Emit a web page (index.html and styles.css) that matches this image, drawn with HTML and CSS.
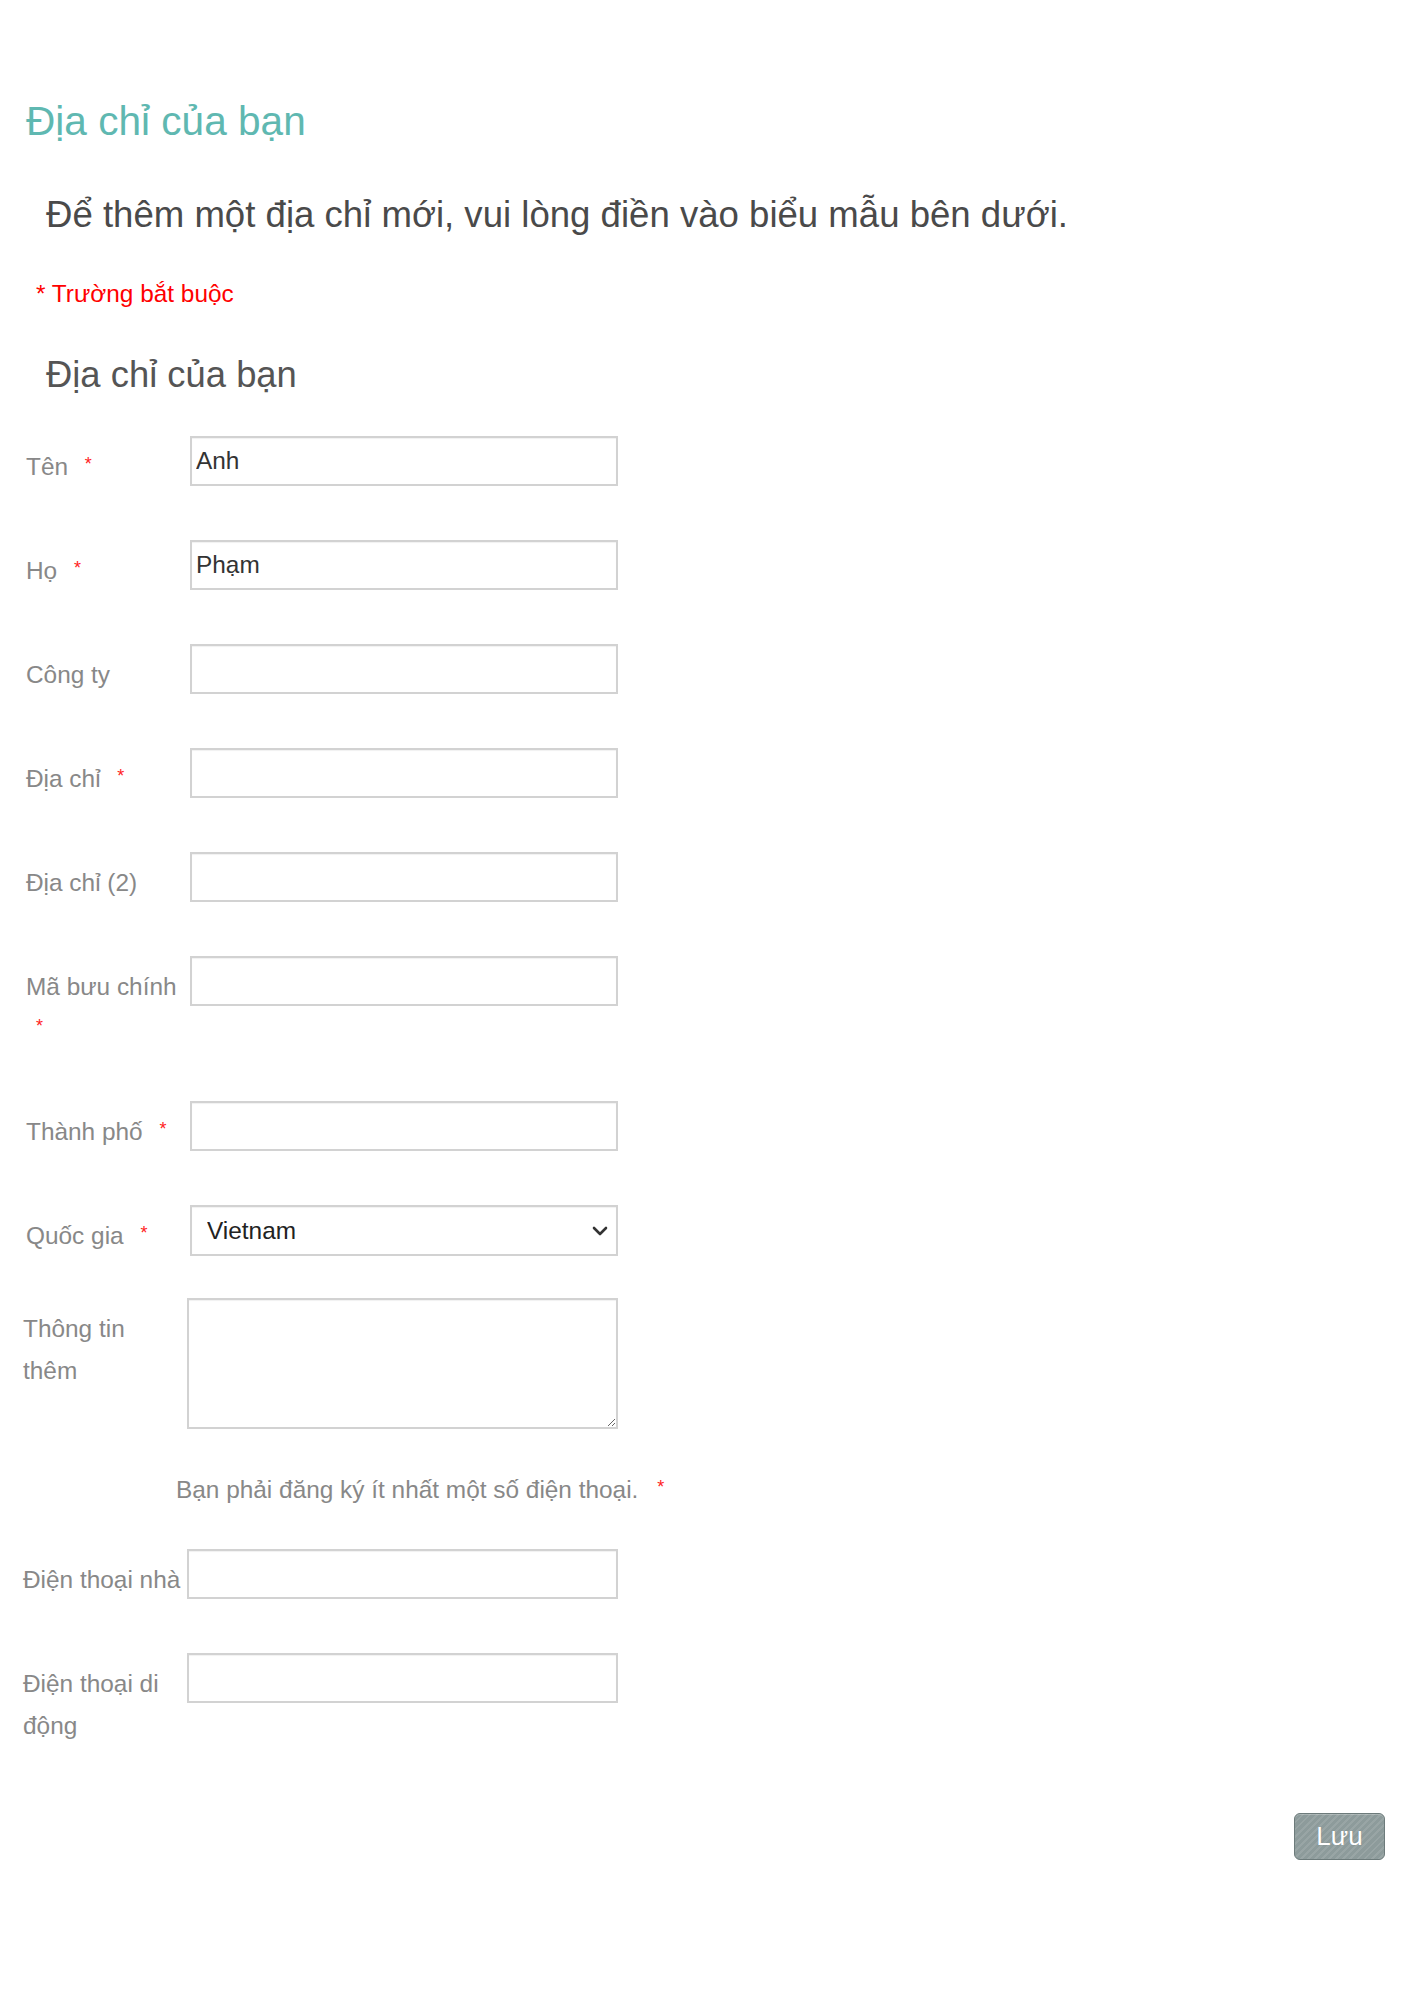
FILE: index.html
```html
<!DOCTYPE html>
<html lang="vi">
<head>
<meta charset="utf-8">
<title>Địa chỉ của bạn</title>
<link rel="stylesheet" href="styles.css">
</head>
<body>
<div class="page">
  <h1 class="title">Địa chỉ của bạn</h1>
  <p class="intro">Để thêm một địa chỉ mới, vui lòng điền vào biểu mẫu bên dưới.</p>
  <p class="required-note">* Trường bắt buộc</p>
  <h2 class="subtitle">Địa chỉ của bạn</h2>

  <form class="form">
    <div class="row">
      <label class="label">Tên <span class="req">*</span></label>
      <input class="field" type="text" value="Anh">
    </div>
    <div class="row">
      <label class="label">Họ <span class="req">*</span></label>
      <input class="field" type="text" value="Phạm">
    </div>
    <div class="row">
      <label class="label">Công ty</label>
      <input class="field" type="text">
    </div>
    <div class="row">
      <label class="label">Địa chỉ <span class="req">*</span></label>
      <input class="field" type="text">
    </div>
    <div class="row">
      <label class="label">Địa chỉ (2)</label>
      <input class="field" type="text">
    </div>
    <div class="row">
      <label class="label">Mã bưu chính <span class="req">*</span></label>
      <input class="field" type="text">
    </div>
    <div class="row">
      <label class="label">Thành phố <span class="req">*</span></label>
      <input class="field" type="text">
    </div>
    <div class="row row-select">
      <label class="label">Quốc gia <span class="req">*</span></label>
      <div class="select-wrap">
        <select class="field select">
          <option>Vietnam</option>
        </select>
        <svg class="chevron" width="16" height="10" viewBox="0 0 16 10" aria-hidden="true"><path d="M2 2 L8 8 L14 2" fill="none" stroke="#333" stroke-width="2.6" stroke-linecap="round" stroke-linejoin="round"/></svg>
      </div>
    </div>
    <div class="row row-wide row-textarea">
      <label class="label">Thông tin thêm</label>
      <textarea class="field area"></textarea>
    </div>
    <p class="phone-note">Bạn phải đăng ký ít nhất một số điện thoại. <span class="req">*</span></p>
    <div class="row row-wide">
      <label class="label">Điện thoại nhà</label>
      <input class="field" type="text">
    </div>
    <div class="row row-wide row-last">
      <label class="label">Điện thoại di động</label>
      <input class="field" type="text">
    </div>
    <div class="actions">
      <button type="button" class="btn">Lưu</button>
    </div>
  </form>
</div>
</body>
</html>
```
FILE: styles.css
```css
html, body {
  margin: 0;
  padding: 0;
  background: #fff;
}
body {
  font-family: "Liberation Sans", Arial, sans-serif;
  color: #555;
}
.page {
  padding: 97px 29px 120px 26px;
}
.title {
  margin: 0;
  font-size: 40.6px;
  line-height: 48px;
  font-weight: normal;
  color: #5fb8b1;
}
.intro {
  margin: 48px 0 0 20px;
  font-size: 36.6px;
  line-height: 44px;
  color: #4a4a4a;
}
.required-note {
  margin: 42px 0 0 10px;
  font-size: 24.4px;
  line-height: 30px;
  color: #f00;
}
.subtitle {
  margin: 44px 0 0 20px;
  font-size: 36.4px;
  line-height: 44px;
  font-weight: normal;
  color: #555;
}
.form {
  margin-top: 39px;
}
.row {
  display: flex;
  align-items: flex-start;
  margin-bottom: 54px;
}
.label {
  width: 160px;
  flex: none;
  padding-top: 10px;
  margin-bottom: -3px;
  font-size: 24.4px;
  line-height: 42px;
  color: #888;
}
.req {
  padding-left: 10px;
  font-size: 18px;
  line-height: 0;
  color: #f22;
  vertical-align: 5px;
}
.field {
  box-sizing: border-box;
  width: 428px;
  height: 50px;
  margin: 0 0 0 4px;
  padding: 0 4px;
  border: 2px solid #d2d2d2;
  box-shadow: inset 0 1px 1px rgba(0,0,0,0.06);
  font-family: "Liberation Sans", Arial, sans-serif;
  font-size: 24.4px;
  color: #333;
  background: #fff;
  outline: none;
}
.row-select {
  margin-bottom: 42px;
}
.select-wrap {
  position: relative;
  margin-left: 4px;
}
.select {
  margin: 0;
  height: 51px;
  padding: 0 40px 0 15px;
  appearance: none;
  -webkit-appearance: none;
  border-radius: 0;
  color: #222;
}
.chevron {
  position: absolute;
  right: 10px;
  top: 21px;
  pointer-events: none;
}
.row-wide {
  margin-left: -3px;
}
.row-wide .field {
  width: 431px;
}
.row-textarea {
  margin-bottom: 46px;
}
.area {
  height: 131px;
  resize: both;
  padding: 4px;
}
.phone-note {
  margin: 0 0 44px 150px;
  font-size: 24.4px;
  line-height: 30px;
  color: #888;
}
.phone-note .req {
  padding-left: 12px;
}
.row-last {
  margin-bottom: 69px;
}
.actions {
  display: flex;
  justify-content: flex-end;
}
.btn {
  box-sizing: border-box;
  width: 91px;
  height: 47px;
  padding: 0;
  border: 1px solid #6d7b7b;
  border-radius: 6px;
  background-color: #8d9b9b;
  background-image: repeating-linear-gradient(135deg, rgba(255,255,255,0.10) 0 2px, rgba(255,255,255,0) 2px 5px);
  box-shadow: inset 0 1px 0 rgba(255,255,255,0.25);
  font-family: "Liberation Sans", Arial, sans-serif;
  font-size: 26px;
  color: #fff;
  text-shadow: 0 0 1px rgba(0,0,0,0.2);
  cursor: pointer;
}
```
